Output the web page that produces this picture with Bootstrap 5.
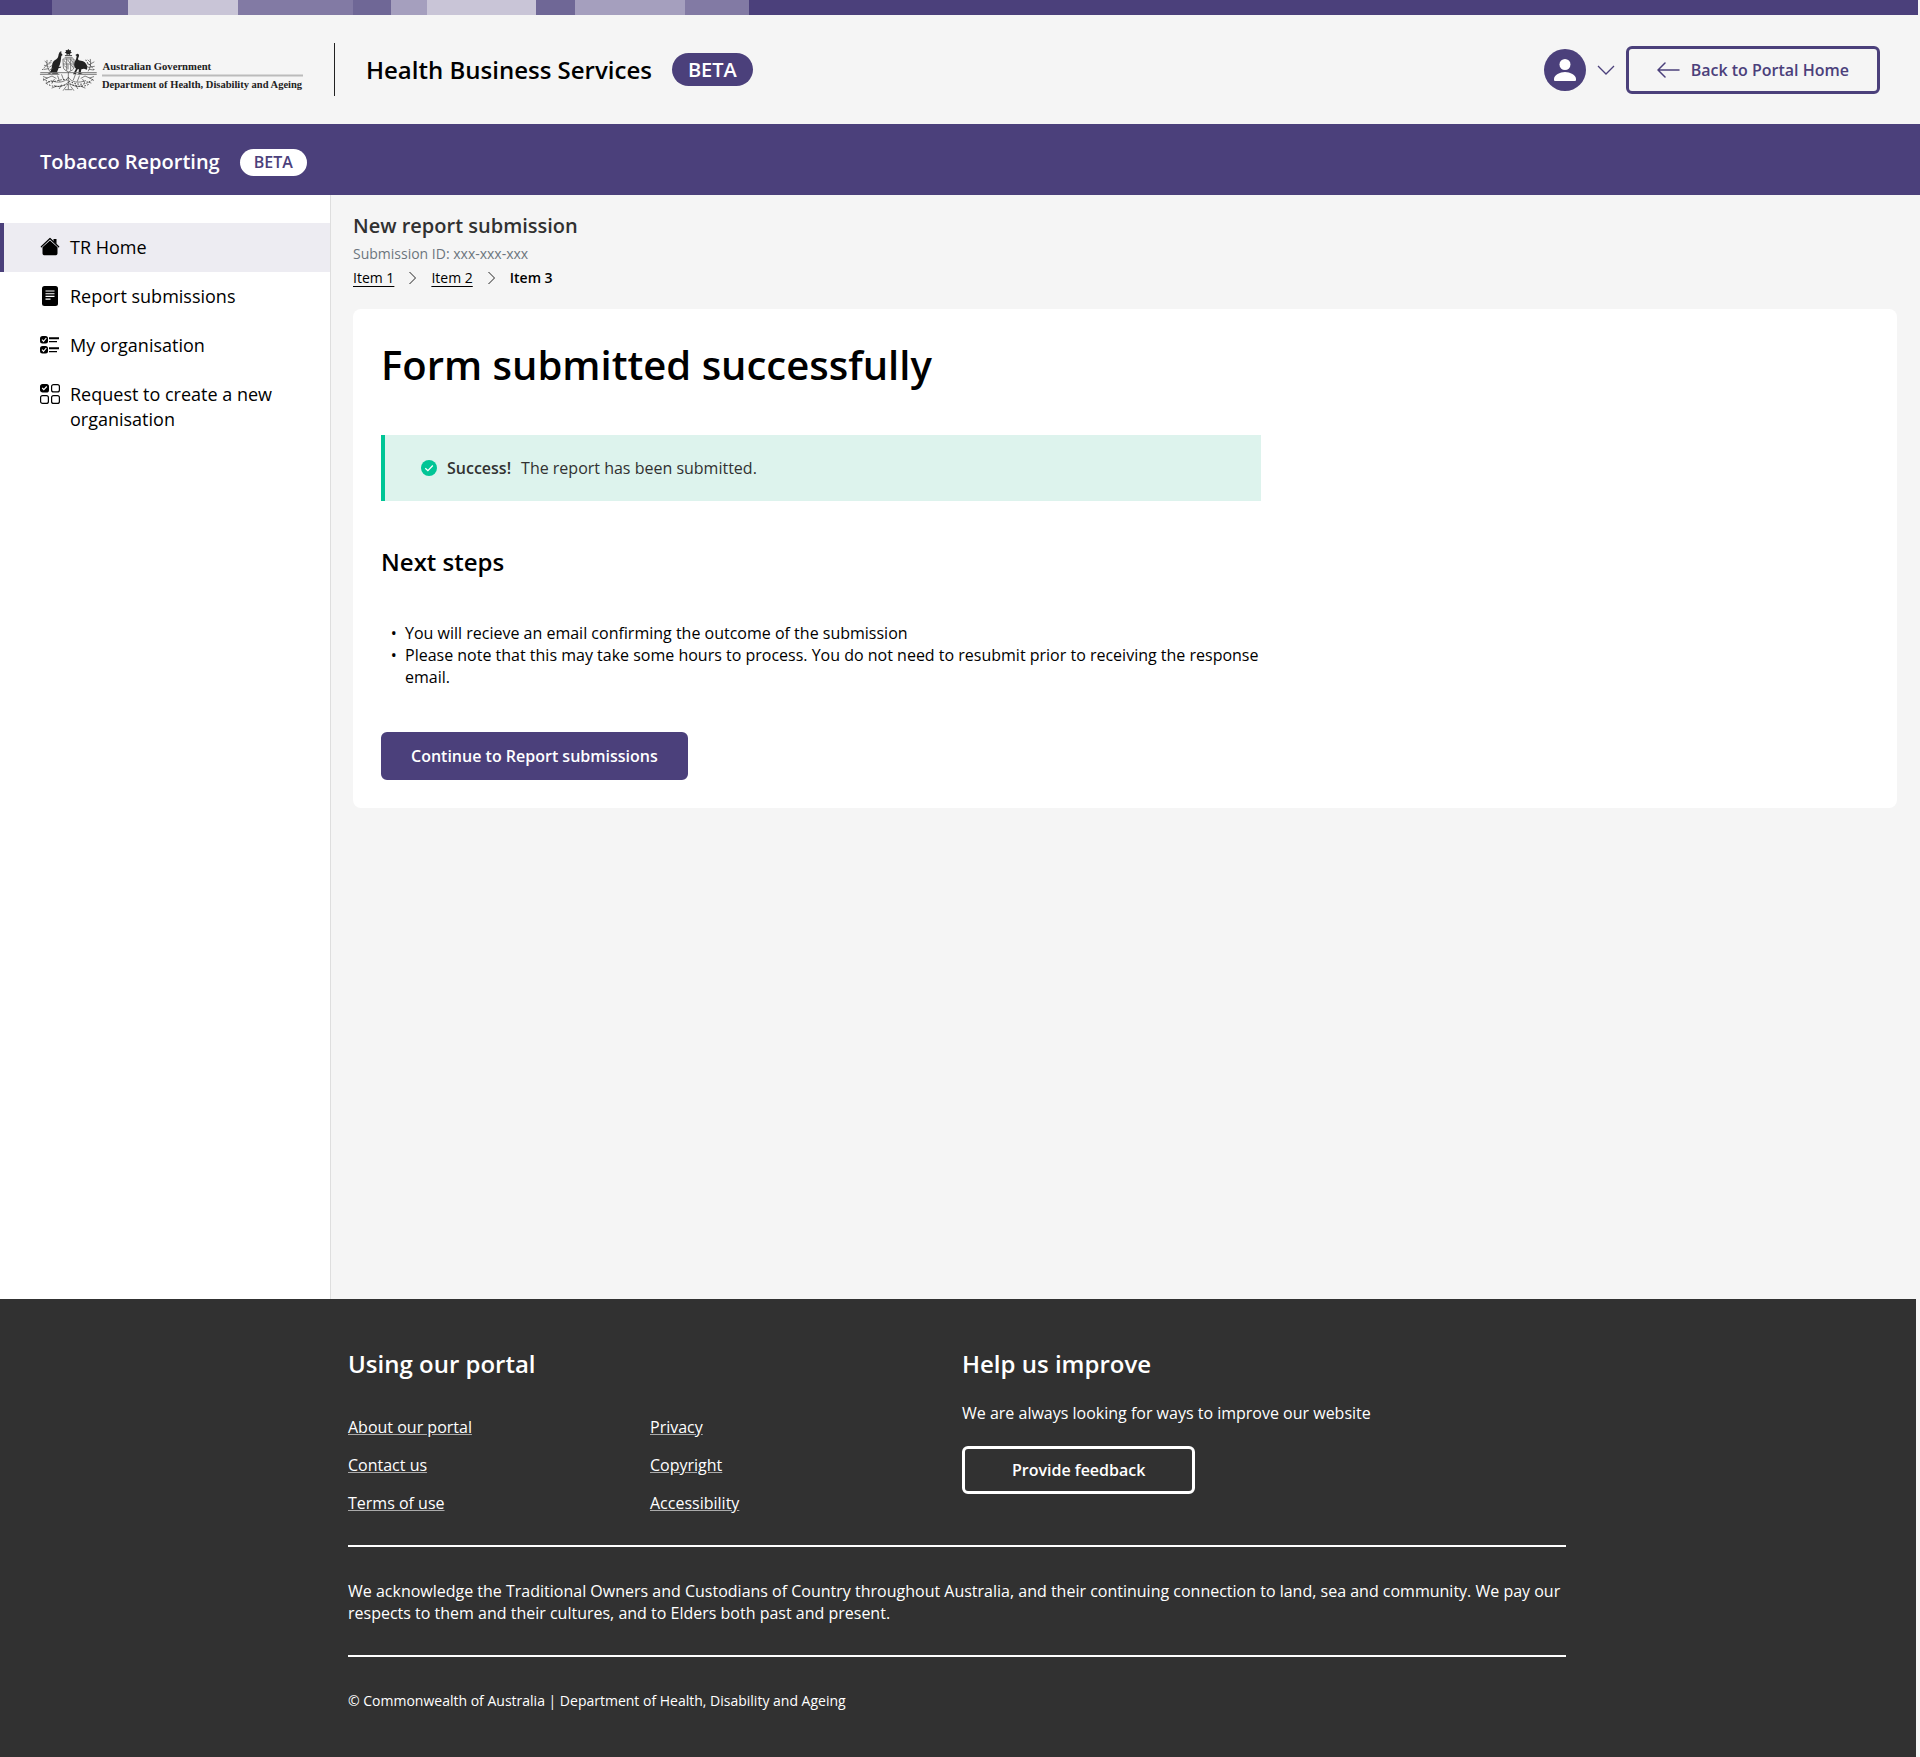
<!DOCTYPE html>
<html lang="en">
<head>
<meta charset="utf-8">
<meta name="viewport" content="width=device-width, initial-scale=1">
<title>Tobacco Reporting - Form submitted</title>
<link href="https://cdn.jsdelivr.net/npm/bootstrap@5.3.0/dist/css/bootstrap.min.css" rel="stylesheet">
<style>
:root{--brand:#4b407b;--ink:#313131;--page:#f5f5f5}
body{font-family:"Open Sans",sans-serif;font-size:16px;line-height:22px;color:#000;background:var(--page)}
h1,h2,p,ul{margin:0}
svg{display:block;flex:none}
.strip{height:15px;margin-right:2px;background:linear-gradient(to right,#4b407b 0 52px,#6f6796 52px 128px,#c9c5d7 128px 238px,#827aa4 238px 353px,#6f6796 353px 391px,#a59fbe 391px 427px,#c9c5d7 427px 536px,#6f6796 536px 575px,#a59fbe 575px 685px,#827aa4 685px 749px,#4b407b 749px)}
.masthead{height:109px;padding:0 40px}
.gov-logo text{font-family:"Liberation Serif",serif;font-weight:700;fill:#222}
.rule-v{width:1px;height:53px;margin:0 31px 0 31px;background:#222}
.site-name{font-size:24px;font-weight:600;line-height:33px}
.pill-lg{margin-left:20px;font-size:20px;font-weight:600;line-height:33px;padding:0 16px;border-radius:17px;background:var(--brand);color:#fff}
.pill-sm{margin-left:20px;font-size:16px;font-weight:600;line-height:27px;padding:0 14px;border-radius:14px;background:#fff;color:var(--brand)}
.appbar{height:71px;padding:5px 40px 0;background:var(--brand);color:#fff}
.app-name{font-size:20px;font-weight:600}
.btn{--bs-btn-font-weight:600;--bs-btn-line-height:22px;--bs-btn-border-width:3px;--bs-btn-border-radius:6px;--bs-btn-padding-x:28px;--bs-btn-padding-y:10px}
.btn-line{--bs-btn-color:var(--brand);--bs-btn-border-color:var(--brand);gap:10px}
.btn-brand{--bs-btn-bg:var(--brand);--bs-btn-border-color:var(--brand);--bs-btn-color:#fff;--bs-btn-hover-bg:#3a3163;--bs-btn-hover-color:#fff;--bs-btn-padding-x:27px}
.btn-light-line{--bs-btn-color:#fff;--bs-btn-border-color:#fff;--bs-btn-padding-x:47px}
.side{width:331px;flex:none;background:#fff;border-right:1px solid #dedede;padding-top:28px}
.side .nav-link{color:#000;font-size:18px;line-height:25px;padding:12px 40px;gap:10px}
.side .nav-link.active{background:#edecf2;border-left:4px solid var(--brand);padding-left:36px}
.side svg{margin-top:2px}
.content-area{padding:17px 23px 0 22px}
.page-name{font-size:20px;font-weight:600;line-height:27px;color:var(--ink)}
.sub-id{font-size:14px;color:#6c757d}
.crumbs{font-size:14px;gap:15px;margin-top:2px}
.crumbs a{color:#000;text-underline-offset:3px}
.panel{background:#fff;border-radius:8px;padding:28px;margin-top:20px}
.panel-inner{max-width:880px}
.title{font-size:40px;font-weight:600;line-height:56px}
.note{background:#ddf3ed;border-left:4px solid #00c596;height:66px;padding-left:36px;gap:10px;margin:42px 0 44px;color:var(--ink)}
.section-title{font-size:24px;font-weight:600;line-height:33px}
.steps{padding-left:24px;margin:44px 0;list-style-type:"•  "}
.foot{background:var(--ink);color:#fff;margin-right:4px;padding:48px 350px 45px 348px}
.foot a{color:#fff}
.foot-links{gap:16px;margin-top:36px}
.foot-rule{border-top:2px solid #fff;margin-top:31px;padding-top:33px}
.foot .links{width:302px}
.foot-links a{text-decoration-color:#aaa}
.foot-help{padding-left:5px}
.foot-help p{margin:22px 0}
.fine{font-size:14px}
</style>
<script src="https://cdn.jsdelivr.net/npm/bootstrap@5.3.0/dist/js/bootstrap.bundle.min.js"></script>
</head>
<body class="d-flex flex-column min-vh-100">
<div class="strip"></div>
<header class="masthead d-flex align-items-center">
  <a href="#" aria-label="Australian Government Department of Health, Disability and Ageing">
    <svg class="gov-logo" width="263" height="42" viewBox="0 0 1578 252" overflow="visible">
      <g transform="scale(2)" fill="none" stroke="#333" stroke-linecap="round">
      <path fill="#222" stroke="none" d="M85 0l3 4 5-1-1 5 4 3-5 2-1 5-5-2-5 2-1-5-5-2 4-3-1-5 5 1z"/>
      <path stroke-width="3" d="M76 20h19"/>
      <path fill="#222" stroke="none" d="M56 16l3-7 2 1 1-4 2 1 0 6 4 5-4 3-2 16-3 12-3 4 8 0-2 3-6 1-5 13 4 4h-20l6-5c-5 3-10 5-18 6 8-5 12-12 13-25 1-10 6-16 13-19 5-3 6-9 7-15z"/>
      <path fill="#222" stroke="none" d="M106 18l6-4c4 0 6 3 5 7l-3 8c0 5 4 5 9 6 9 1 15 6 19 17l-1 10-9-3-8 2-2 11 6 3h-13l2-14-4 0-6 11 4 4h-12l9-17c-5-5-7-10-5-17 1-6 7-11 7-21z"/>
      <path stroke="#444" stroke-width="2" d="M70 30h32v25c0 7-8 10-16 14-8-4-16-7-16-14zM70 45h32M80 30v34M92 30v34M73 35l3 5M84 34l5 7 M95 34l4 7M73 50l5 5M84 48v12M95 49l4 6M75 26h22"/>
      <path stroke="#777" stroke-width="3" d="M2 71h167M1 76h56M113 76h56"/>
      <path stroke="#444" stroke-width="2" d="M29 67c-6-10-10-18-8-33m1 9l-7-6m9 15l-11-3m13 10l-13 2m14-15l7-7m-5 15l8-5m-7 13l9-4M145 66c6-9 9-20 6-35m0 9l-7-7m7 15l-9-4m7 12l-8-3m10-8l11-6m-12 15l13-2m-16 9l13 2"/>
      <path stroke="#444" stroke-width="2" d="M85 70v50M85 85c-10 16-30 18-52 10M85 85c10 16 30 18 52 10M85 100c-12 10-26 16-42 10M85 100c12 10 26 16 42 10M10 83l12 4-12 7M22 87l14-6 12 7M30 98l-12 4M43 91l-7 12m17-22l6 16m6-20l6 16M48 112l-12 5m28-9l-6 11M161 83l-12 4 12 7M149 87l-14-6-12 7M141 98l12 4M128 91l7 12m-17-22l-6 16m-6-20l-6 16M123 112l12 5m-28-9l6 11M78 113l-8 11M93 113l8 11M76 122h19"/>
      <path stroke="#333" stroke-width="3" stroke-dasharray="2 7" d="M10 90c30 22 52-8 75 5s50 17 75-5M20 104c30 17 45 4 65 3s35 14 65-3M8 62c20-26 24-20 27-32M162 62c-20-24-22-20-25-32"/>
      </g>
      <path fill="#bbb" d="M372 153h1206v12H372z"/>
      <text x="375" y="126" font-size="64">Australian Government</text>
      <text x="372" y="234" font-size="63">Department of Health, Disability and Ageing</text>
    </svg>
  </a>
  <div class="rule-v"></div>
  <span class="site-name">Health Business Services</span>
  <span class="pill-lg">BETA</span>
  <div class="d-flex align-items-center ms-auto">
    <button type="button" class="border-0 bg-transparent p-0 d-flex align-items-center me-1" aria-label="Account menu">
      <svg width="42" height="42" viewBox="0 0 42 42"><circle cx="21" cy="21" r="21" fill="#4b407b"/><circle cx="21" cy="15.500" r="5.500" fill="#fff"/><path fill="#fff" d="M10 31v-1c0-4 6-7 11-7s11 3 11 7v1q0 1-1 1H11q-1 0-1-1z"/></svg>
      <svg class="ms-2 me-1" width="24" height="24" viewBox="0 0 24 24" fill="none" stroke="#4b407b" stroke-width="1.300"><path d="M4 8l8 8 8-8"/></svg>
    </button>
    <a href="#" class="btn btn-line d-flex align-items-center">
      <svg width="24" height="22" viewBox="0 0 24 22" fill="none" stroke="#4b407b" stroke-width="1.500" stroke-linecap="round"><path d="M1 11h21M8 4l-7 7 7 7"/></svg>
      <span>Back to Portal Home</span>
    </a>
  </div>
</header>
<div class="appbar d-flex align-items-center">
  <span class="app-name">Tobacco Reporting</span><span class="pill-sm">BETA</span>
</div>
<div class="d-flex flex-grow-1">
  <nav class="side nav flex-column" aria-label="Tobacco Reporting">
    <a class="nav-link active d-flex" href="#" aria-current="page">
      <svg width="20" height="20" viewBox="0 0 20 20"><path fill="#000" d="M13.500 2h3v5l-3-2.800zM10 3.600l7.500 6.700v6.200q0 1.800-1.800 1.800H4.300q-1.800 0-1.800-1.800v-6.200z"/><path fill="none" stroke="#000" stroke-width="1.200" stroke-linecap="round" stroke-linejoin="round" d="M1.300 9.800L10 1.500l8.700 8.300"/></svg>
      <span>TR Home</span></a>
    <a class="nav-link d-flex" href="#">
      <svg width="20" height="20" viewBox="0 0 20 20"><rect x="2" width="16" height="20" rx="2.500"/><path stroke="#fff" stroke-width="1.100" d="M5.500 5h9M5.500 7.700h9M5.500 10.400h9M5.500 13.100h5"/></svg>
      <span>Report submissions</span></a>
    <a class="nav-link d-flex" href="#">
      <svg width="20" height="20" viewBox="0 0 20 20"><rect y="1" width="8" height="7.500" rx="2.500"/><rect y="11" width="8" height="7.500" rx="2.500"/><path fill="none" stroke="#fff" stroke-width="1.100" d="M2 4.700l1.500 1.600L6.300 3M2 14.700l1.500 1.600L6.300 13"/><path stroke="#000" stroke-width="2" d="M9 3.200h10M9 13.200h10"/><path stroke="#000" stroke-width="1.200" d="M9 6.600h8M9 16.600h8"/></svg>
      <span>My organisation</span></a>
    <a class="nav-link d-flex" href="#">
      <svg width="20" height="20" viewBox="0 0 20 20" fill="none" stroke="#000" stroke-width="1.200"><rect x=".6" y=".6" width="7.800" height="7.300" rx="2" fill="#000"/><rect x="11.600" y=".6" width="7.800" height="7.300" rx="2"/><rect x=".6" y="11.600" width="7.800" height="7.800" rx="2"/><rect x="11.600" y="11.600" width="7.800" height="7.800" rx="2"/><path stroke="#fff" d="M2.200 4l1.600 1.700 3-3.200"/></svg>
      <span>Request to create a new organisation</span></a>
  </nav>
  <main class="content-area flex-grow-1">
    <div class="page-name">New report submission</div>
    <div class="sub-id mt-1">Submission ID: xxx-xxx-xxx</div>
    <nav class="crumbs d-flex align-items-center" aria-label="Breadcrumb">
      <a href="#">Item 1</a>
      <svg width="7" height="14" viewBox="0 0 7 14" fill="none" stroke="#222"><path d="M.5 1l6 6-6 6"/></svg>
      <a href="#">Item 2</a>
      <svg width="7" height="14" viewBox="0 0 7 14" fill="none" stroke="#222"><path d="M.5 1l6 6-6 6"/></svg>
      <span class="fw-semibold">Item 3</span>
    </nav>
    <section class="panel">
      <div class="panel-inner">
        <h1 class="title">Form submitted successfully</h1>
        <div class="note d-flex align-items-center" role="status">
          <svg width="16" height="16" viewBox="0 0 16 16"><circle cx="8" cy="8" r="8" fill="#00c596"/><path fill="none" stroke="#fff" stroke-width="1.300" d="M4.300 8.200l2.600 2.500 4.900-5.200"/></svg>
          <strong class="fw-semibold">Success!</strong><span>The report has been submitted.</span>
        </div>
        <h2 class="section-title">Next steps</h2>
        <ul class="steps">
          <li>You will recieve an email confirming the outcome of the submission</li>
          <li>Please note that this may take some hours to process. You do not need to resubmit prior to receiving the response email.</li>
        </ul>
        <button type="button" class="btn btn-brand">Continue to Report submissions</button>
      </div>
    </section>
  </main>
</div>
<footer class="foot">
  <div class="d-flex">
    <div class="d-flex flex-column w-50">
      <h2 class="section-title">Using our portal</h2>
      <div class="d-flex">
        <div class="links foot-links d-flex flex-column align-items-start"><a href="#">About our portal</a><a href="#">Contact us</a><a href="#">Terms of use</a></div>
        <div class="foot-links d-flex flex-column align-items-start"><a href="#">Privacy</a><a href="#">Copyright</a><a href="#">Accessibility</a></div>
      </div>
    </div>
    <div class="foot-help">
      <h2 class="section-title">Help us improve</h2>
      <p>We are always looking for ways to improve our website</p>
      <button type="button" class="btn btn-light-line">Provide feedback</button>
    </div>
  </div>
  <div class="foot-rule">
    <p>We acknowledge the Traditional Owners and Custodians of Country throughout Australia, and their continuing connection to land, sea and community. We pay our respects to them and their cultures, and to Elders both past and present.</p>
  </div>
  <div class="foot-rule">
    <p class="fine">© Commonwealth of Australia | Department of Health, Disability and Ageing</p>
  </div>
</footer>
</body>
</html>
